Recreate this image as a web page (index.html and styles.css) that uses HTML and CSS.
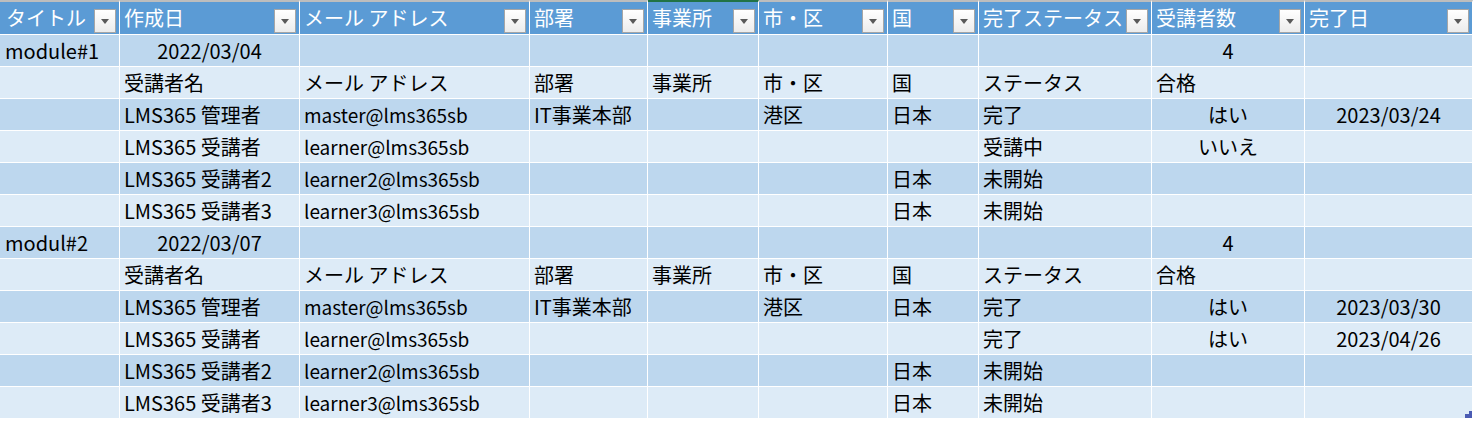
FILE: index.html
```html
<!DOCTYPE html>
<html lang="ja">
<head>
<meta charset="utf-8">
<title>Sheet</title>
<link rel="stylesheet" href="styles.css">
</head>
<body>
<div class="sheet">
  <div class="row head">
    <div class="c">タイトル<span class="fb"></span></div>
    <div class="c">作成日<span class="fb"></span></div>
    <div class="c">メール アドレス<span class="fb"></span></div>
    <div class="c">部署<span class="fb"></span></div>
    <div class="c sel">事業所<span class="fb"></span></div>
    <div class="c">市・区<span class="fb"></span></div>
    <div class="c">国<span class="fb"></span></div>
    <div class="c">完了ステータス<span class="fb"></span></div>
    <div class="c">受講者数<span class="fb"></span></div>
    <div class="c">完了日<span class="fb"></span></div>
  </div>

  <div class="row dark">
    <div class="c">module#1</div><div class="c ctr">2022/03/04</div><div class="c"></div><div class="c"></div><div class="c"></div><div class="c"></div><div class="c"></div><div class="c"></div><div class="c ctr">4</div><div class="c"></div>
  </div>
  <div class="row light sub">
    <div class="c"></div><div class="c">受講者名</div><div class="c">メール アドレス</div><div class="c">部署</div><div class="c">事業所</div><div class="c">市・区</div><div class="c">国</div><div class="c">ステータス</div><div class="c">合格</div><div class="c"></div>
  </div>
  <div class="row dark">
    <div class="c"></div><div class="c">LMS365 管理者</div><div class="c mail">master@lms365sb</div><div class="c">IT事業本部</div><div class="c"></div><div class="c">港区</div><div class="c">日本</div><div class="c">完了</div><div class="c ctr">はい</div><div class="c ctr">2023/03/24</div>
  </div>
  <div class="row light">
    <div class="c"></div><div class="c">LMS365 受講者</div><div class="c mail">learner@lms365sb</div><div class="c"></div><div class="c"></div><div class="c"></div><div class="c"></div><div class="c">受講中</div><div class="c ctr">いいえ</div><div class="c"></div>
  </div>
  <div class="row dark">
    <div class="c"></div><div class="c">LMS365 受講者2</div><div class="c mail">learner2@lms365sb</div><div class="c"></div><div class="c"></div><div class="c"></div><div class="c">日本</div><div class="c">未開始</div><div class="c"></div><div class="c"></div>
  </div>
  <div class="row light">
    <div class="c"></div><div class="c">LMS365 受講者3</div><div class="c mail">learner3@lms365sb</div><div class="c"></div><div class="c"></div><div class="c"></div><div class="c">日本</div><div class="c">未開始</div><div class="c"></div><div class="c"></div>
  </div>

  <div class="row dark">
    <div class="c">modul#2</div><div class="c ctr">2022/03/07</div><div class="c"></div><div class="c"></div><div class="c"></div><div class="c"></div><div class="c"></div><div class="c"></div><div class="c ctr">4</div><div class="c"></div>
  </div>
  <div class="row light sub">
    <div class="c"></div><div class="c">受講者名</div><div class="c">メール アドレス</div><div class="c">部署</div><div class="c">事業所</div><div class="c">市・区</div><div class="c">国</div><div class="c">ステータス</div><div class="c">合格</div><div class="c"></div>
  </div>
  <div class="row dark">
    <div class="c"></div><div class="c">LMS365 管理者</div><div class="c mail">master@lms365sb</div><div class="c">IT事業本部</div><div class="c"></div><div class="c">港区</div><div class="c">日本</div><div class="c">完了</div><div class="c ctr">はい</div><div class="c ctr">2023/03/30</div>
  </div>
  <div class="row light">
    <div class="c"></div><div class="c">LMS365 受講者</div><div class="c mail">learner@lms365sb</div><div class="c"></div><div class="c"></div><div class="c"></div><div class="c"></div><div class="c">完了</div><div class="c ctr">はい</div><div class="c ctr">2023/04/26</div>
  </div>
  <div class="row dark">
    <div class="c"></div><div class="c">LMS365 受講者2</div><div class="c mail">learner2@lms365sb</div><div class="c"></div><div class="c"></div><div class="c"></div><div class="c">日本</div><div class="c">未開始</div><div class="c"></div><div class="c"></div>
  </div>
  <div class="row light">
    <div class="c"></div><div class="c">LMS365 受講者3</div><div class="c mail">learner3@lms365sb</div><div class="c"></div><div class="c"></div><div class="c"></div><div class="c">日本</div><div class="c">未開始</div><div class="c"></div><div class="c last"><svg class="handle" width="7" height="7" viewBox="0 0 7 7"><path d="M4 0H7V7H0V3H4Z" fill="#4a5bb3"/></svg></div>
  </div>
</div>
</body>
</html>
```

FILE: styles.css
```css
html, body {
  margin: 0;
  padding: 0;
  background: #ffffff;
}

.sheet {
  width: 1473px;
  font-family: "Noto Sans CJK JP", "Noto Sans", sans-serif;
  font-size: 20px;
  color: #000000;
}

.row {
  display: grid;
  grid-template-columns: 120px 180px 230px 118px 111px 129px 91px 173px 153px 168px;
  height: 32px;
}

.c {
  position: relative;
  box-sizing: border-box;
  border-right: 1px solid #ffffff;
  border-bottom: 1px solid #ffffff;
  padding: 0 4px;
  line-height: 31px;
  white-space: nowrap;
  overflow: hidden;
}

.c:first-child {
  padding-left: 5px;
}

.ctr {
  text-align: center;
}

.dark .c {
  background: #bdd7ee;
}

.light .c {
  background: #ddebf7;
}

.mail {
  font-size: 19px;
}

.head {
  height: 35px;
}

.head .c {
  background: #5b9bd5;
  color: #ffffff;
  border-top: 2px solid #bdbdbd;
  line-height: 32px;
  padding-left: 4px;
}

.head .c:first-child {
  padding-left: 6px;
}

.head .c.sel {
  border-top-color: #217346;
}

.fb {
  position: absolute;
  right: 3px;
  bottom: 1px;
  width: 22px;
  height: 24px;
  box-sizing: border-box;
  border: 1px solid #a6a6a6;
  background: linear-gradient(#ffffff, #ececec);
}

.fb::after {
  content: "";
  position: absolute;
  left: 6px;
  top: 9px;
  width: 0;
  height: 0;
  border-left: 4px solid transparent;
  border-right: 4px solid transparent;
  border-top: 5px solid #595959;
}

.handle {
  position: absolute;
  right: 0;
  bottom: 0;
  display: block;
}
```
